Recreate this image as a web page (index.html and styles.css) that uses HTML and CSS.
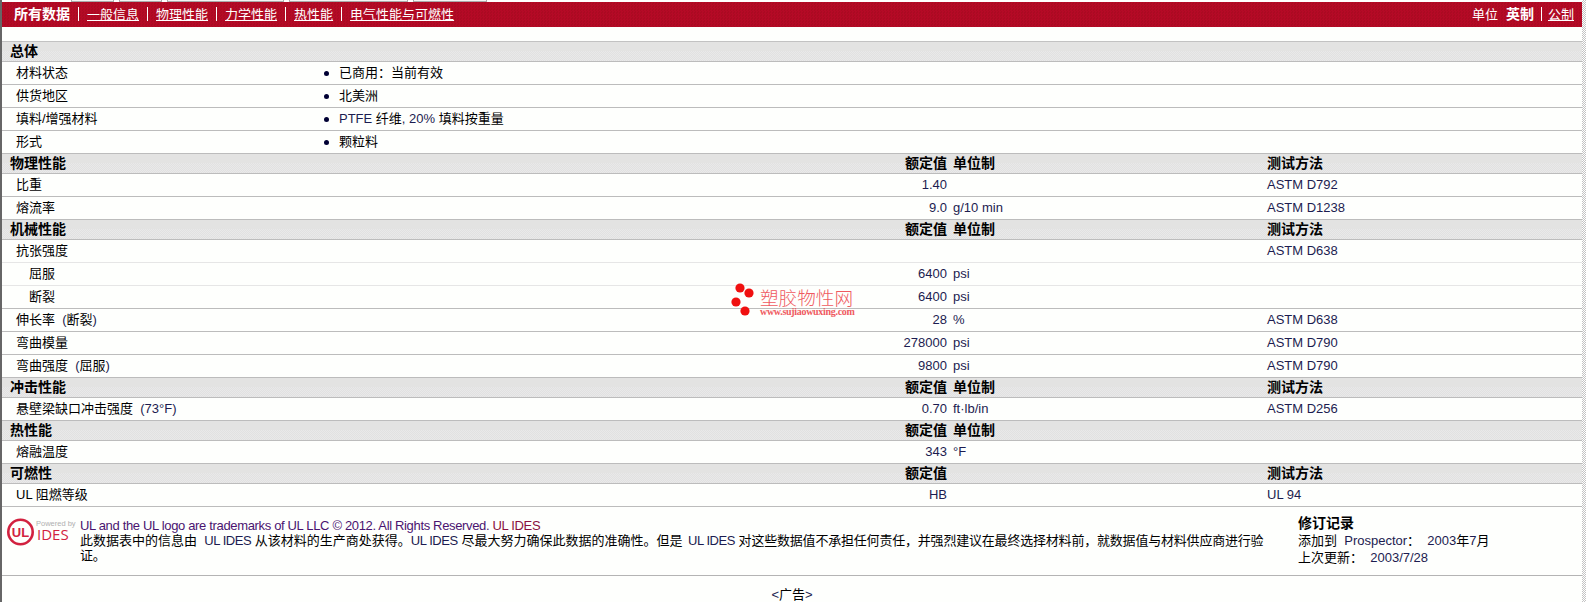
FILE: index.html
```html
<!DOCTYPE html>
<html lang="zh">
<head>
<meta charset="utf-8">
<title>材料数据</title>
<link rel="stylesheet" href="styles.css">
</head>
<body>
<div class="page">
<main class="main">
  <div class="tabs">
    <span class="tab t1"></span><span class="tab t2"></span><span class="tab t3"></span><span class="tab t4"></span><span class="tab t5"></span>
  </div>
  <nav class="bar">
    <div class="nav">
      <b class="current">所有数据</b><i class="sep"></i>
      <a href="#">一般信息</a><i class="sep"></i>
      <a href="#">物理性能</a><i class="sep"></i>
      <a href="#">力学性能</a><i class="sep"></i>
      <a href="#">热性能</a><i class="sep"></i>
      <a href="#">电气性能与可燃性</a>
    </div>
    <div class="units">
      <span>单位</span><b class="current">英制</b><i class="sep"></i><a href="#">公制</a>
    </div>
  </nav>
  <div class="spacer"></div>

  <section>
    <div class="head"><span class="name">总体</span></div>
    <div class="row list"><span class="name">材料状态</span><span class="item"><i class="dot"></i>已商用&#xFF1A;当前有效</span></div>
    <div class="row list"><span class="name">供货地区</span><span class="item"><i class="dot"></i>北美洲</span></div>
    <div class="row list"><span class="name">填料/增强材料</span><span class="item"><i class="dot"></i><span><span class="lat">PTFE</span> 纤维<span class="lat">, 20%</span> 填料按重量</span></span></div>
    <div class="row list"><span class="name">形式</span><span class="item"><i class="dot"></i>颗粒料</span></div>
  </section>

  <section>
    <div class="head"><span class="name">物理性能</span><span class="val">额定值</span><span class="unit">单位制</span><span class="method">测试方法</span></div>
    <div class="row"><span class="name">比重</span><span class="val">1.40</span><span class="unit"></span><span class="method">ASTM D792</span></div>
    <div class="row"><span class="name">熔流率</span><span class="val">9.0</span><span class="unit">g/10 min</span><span class="method">ASTM D1238</span></div>
  </section>

  <section>
    <div class="head"><span class="name">机械性能</span><span class="val">额定值</span><span class="unit">单位制</span><span class="method">测试方法</span></div>
    <div class="row soft"><span class="name">抗张强度</span><span class="val"></span><span class="unit"></span><span class="method">ASTM D638</span></div>
    <div class="row soft"><span class="name sub">屈服</span><span class="val">6400</span><span class="unit">psi</span><span class="method"></span></div>
    <div class="row"><span class="name sub">断裂</span><span class="val">6400</span><span class="unit">psi</span><span class="method"></span></div>
    <div class="row"><span class="name">伸长率 &nbsp;<span class="lat">(</span>断裂<span class="lat">)</span></span><span class="val">28</span><span class="unit">%</span><span class="method">ASTM D638</span></div>
    <div class="row"><span class="name">弯曲模量</span><span class="val">278000</span><span class="unit">psi</span><span class="method">ASTM D790</span></div>
    <div class="row"><span class="name">弯曲强度 &nbsp;<span class="lat">(</span>屈服<span class="lat">)</span></span><span class="val">9800</span><span class="unit">psi</span><span class="method">ASTM D790</span></div>
  </section>

  <section>
    <div class="head"><span class="name">冲击性能</span><span class="val">额定值</span><span class="unit">单位制</span><span class="method">测试方法</span></div>
    <div class="row"><span class="name">悬壁梁缺口冲击强度 &nbsp;<span class="lat">(73°F)</span></span><span class="val">0.70</span><span class="unit">ft·lb/in</span><span class="method">ASTM D256</span></div>
  </section>

  <section>
    <div class="head"><span class="name">热性能</span><span class="val">额定值</span><span class="unit">单位制</span><span class="method"></span></div>
    <div class="row"><span class="name">熔融温度</span><span class="val">343</span><span class="unit">°F</span><span class="method"></span></div>
  </section>

  <section>
    <div class="head"><span class="name">可燃性</span><span class="val">额定值</span><span class="unit"></span><span class="method">测试方法</span></div>
    <div class="row"><span class="name">UL 阻燃等级</span><span class="val">HB</span><span class="unit"></span><span class="method">UL 94</span></div>
  </section>

  <footer class="foot">
    <svg class="logo" width="74" height="36" viewBox="0 -4 74 36" aria-label="UL IDES">
      <circle cx="14.5" cy="14" r="12.2" fill="none" stroke="#d2213f" stroke-width="2.6"/>
      <text x="14.5" y="19" class="logo-ul" text-anchor="middle">UL</text>
      <text x="30" y="8" class="logo-pow">Powered by</text>
      <text x="31" y="22" class="logo-ides">IDES</text>
    </svg>
    <div class="legal">
      <div class="tm">UL and the UL logo are trademarks of UL LLC © 2012. All Rights Reserved. <span class="tm-end">UL IDES</span></div>
      <p>此数据表中的信息由 &nbsp;<span class="lat">UL IDES</span> 从该材料的生产商处获得。<span class="lat">UL IDES</span> 尽最大努力确保此数据的准确性。但是 <span class="lat wide">UL IDES</span> <span class="tail">对这些数据值不承担任何责任&#xFF0C;并强烈建议在最终选择材料前&#xFF0C;就数据值与材料供应商进行验证。</span></p>
    </div>
    <div class="history">
      <strong>修订记录</strong>
      <div>添加到 &nbsp;<span class="lat">Prospector</span>&#xFF1A; &nbsp;<span class="lat">2003</span>年<span class="lat">7</span>月</div>
      <div>上次更新&#xFF1A; &nbsp;<span class="lat">2003/7/28</span></div>
    </div>
  </footer>
  <div class="ad"><span class="lat">&lt;</span>广告<span class="lat">&gt;</span></div>

  <div class="mark">
    <svg class="mark-dots" width="26" height="34" viewBox="0 0 26 34" aria-hidden="true">
      <circle cx="9" cy="5" r="4.6"/><circle cx="18" cy="10" r="4.6"/><circle cx="5" cy="19" r="4.6"/><circle cx="14" cy="28" r="4.6"/>
    </svg>
    <div class="mark-text">
      <div class="mark-cn">塑胶物性网</div>
      <div class="mark-url">www.sujiaowuxing.com</div>
    </div>
  </div>
</main>
<div class="edge"></div>
</div>
</body>
</html>
```
FILE: styles.css
```css
* { box-sizing: border-box; }
html, body { margin: 0; padding: 0; background: #fff; overflow: hidden; }
body {
  font: 13px/1.2 "Liberation Sans", "Noto Sans CJK SC", sans-serif;
  color: #000;
}
.page { display: flex; height: 602px; }
.main {
  position: relative;
  width: 1582px;
  border-left: 2px solid #666;
  background: #fefffd;
}
.edge {
  flex: 1;
  background: repeating-conic-gradient(#c4c4c4 0 25%, #fff 0 50%) 0 0 / 2px 2px;
}

/* top strip */
.tabs { display: flex; height: 2px; background: #fff; padding-left: 69px; gap: 5px; }
.tab { display: block; height: 2px; background: #f4f4f4; border: solid #aaa; border-width: 0 1px 1px; }
.t1 { width: 43px; }
.t2 { width: 43px; }
.t3 { width: 117px; }
.t4 { width: 119px; }
.t5 { width: 74px; }

/* red bar */
.bar {
  display: flex;
  justify-content: space-between;
  align-items: center;
  height: 25px;
  padding: 0 8px 0 12px;
  color: #fff;
  background: repeating-conic-gradient(#b50a26 0 25%, #ab0a22 0 50%) 0 0 / 3px 3px;
}
.nav, .units { display: flex; align-items: center; gap: 8px; }
.bar a { color: #fff; }
.current { font-size: 14px; font-weight: 700; }
.sep { display: block; width: 1px; height: 14px; background: #fff; }
.units .sep { margin: 0 -2px 0 -1px; }
.spacer { height: 15px; border-bottom: 1px solid #c2c2c2; }

/* rows */
.head, .row {
  display: grid;
  grid-template-columns: 322px 623px 320px 1fr;
  align-items: center;
  border-bottom: 1px solid #bcbcbc;
}
.head {
  height: 20px;
  font-size: 14px;
  font-weight: 700;
  background:
    linear-gradient(#e3e3e2 45%, transparent 45%),
    repeating-conic-gradient(#e1e1e1 0 25%, #e9e9e9 0 50%) 0 0 / 2px 2px;
}
.head .name { padding-left: 8px; }
.head .unit, .head .method, .head .val { color: #000; }
.row { height: 23px; }
.row.list { grid-template-columns: 322px 1fr; }
.row.soft { border-bottom-color: #e6e6e6; }
.name { padding-left: 14px; }
.name.sub { padding-left: 27px; }
.val { grid-column: 2; text-align: right; color: #1c1c50; }
.unit { grid-column: 3; padding-left: 6px; color: #1c1c50; }
.method { grid-column: 4; color: #1c1c50; }
.lat { color: #1c1c50; }
.item { display: flex; align-items: center; gap: 10px; }
.dot { display: block; width: 5px; height: 5px; border-radius: 50%; background: #000033; }

/* footer */
.foot {
  display: flex;
  align-items: flex-start;
  height: 69px;
  border-bottom: 1px solid #b4b4b4;
  padding-top: 11px;
}
.logo { flex: none; margin: -4px 0 0 4px; }
.logo-ul { font: 700 13px "Liberation Sans Narrow", "Liberation Sans", sans-serif; fill: #d2213f; }
.logo-pow { font: 7.5px "Liberation Sans", sans-serif; fill: #b0b0b0; }
.logo-ides { font: 15px "Open Sans", sans-serif; fill: #d2213f; }
.legal { flex: none; width: 1190px; line-height: 15px; }
.legal .lat { letter-spacing: -0.45px; }
.legal .wide { margin-left: 2px; }
.legal .tail { letter-spacing: -0.2px; }
.tm { color: #4a1470; letter-spacing: -0.34px; }
.tm-end { color: #8a1040; }
.legal p { margin: 0; }
.history { margin: -3px 0 0 28px; line-height: 17px; }
.history strong { display: block; font-size: 14px; }
.ad { text-align: center; padding-top: 11px; }

/* watermark */
.mark {
  position: absolute;
  left: 729px;
  top: 283px;
  display: flex;
  gap: 3px;
  color: #ef5a60;
  pointer-events: none;
}
.mark-dots { flex: none; fill: #f01010; }
.mark-text { padding-top: 4px; }
.mark-cn { font: 300 18.6px/20px "Noto Sans CJK SC", sans-serif; }
.mark-url { font: 700 10px/10px "Liberation Serif", serif; letter-spacing: -0.3px; }
```
